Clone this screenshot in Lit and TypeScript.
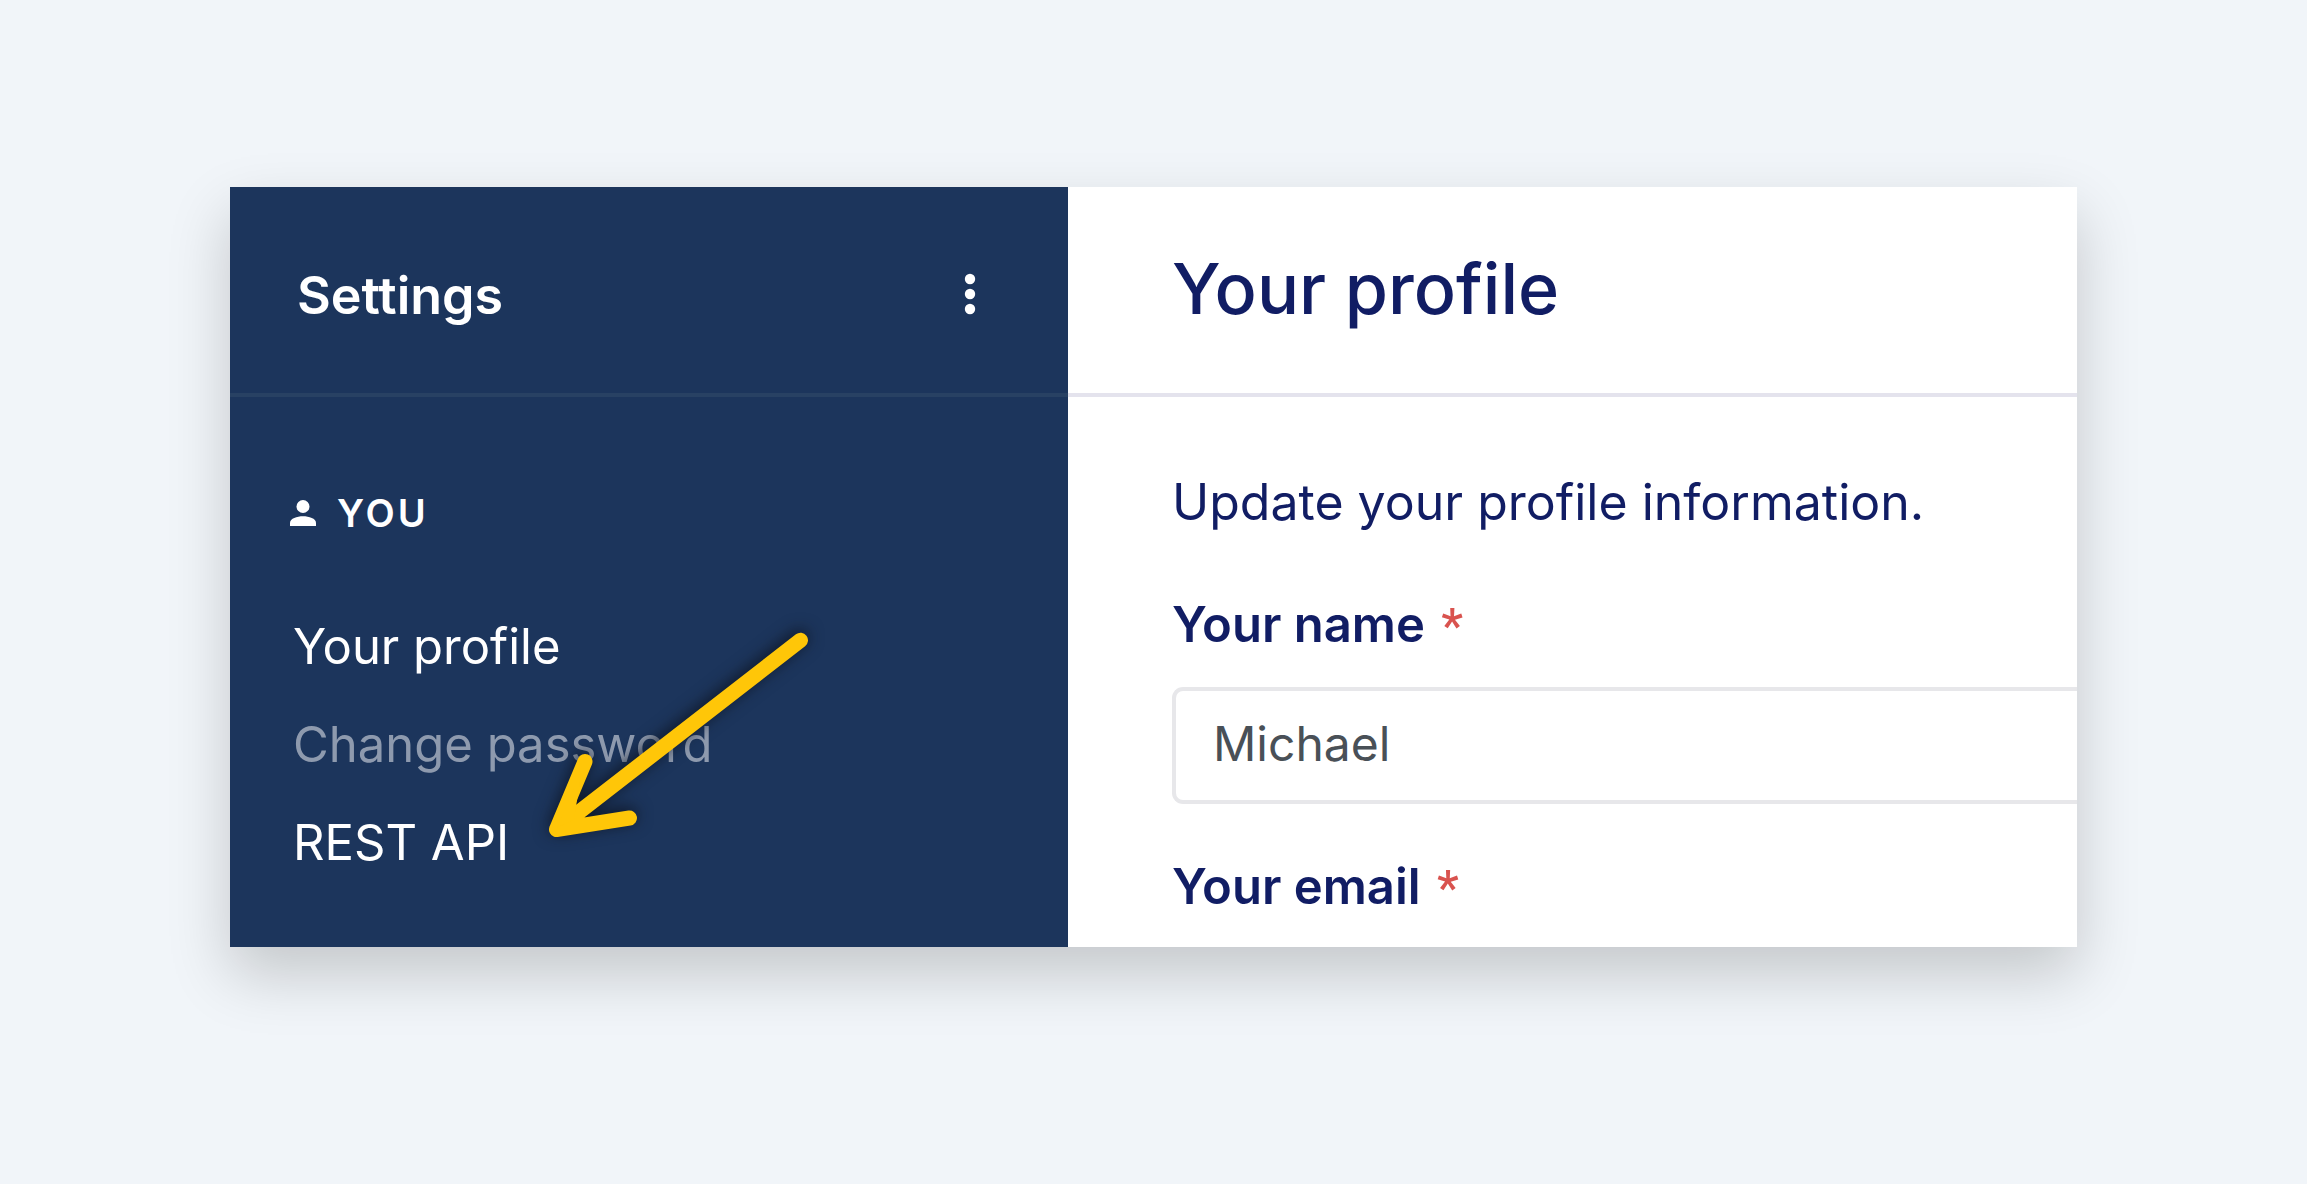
import { LitElement, html, css, svg } from "lit";
import { customElement, property, state } from "lit/decorators.js";
import { classMap } from "lit/directives/class-map.js";

interface NavItem {
  label: string;
  muted?: boolean;
}

@customElement("settings-sidebar")
class SettingsSidebar extends LitElement {
  @property({ attribute: false }) items: NavItem[] = [];

  static styles = css`
    :host {
      display: block;
      position: relative;
      background: #1c355c;
      color: #fff;
    }
    .head {
      box-sizing: border-box;
      height: 210px;
      padding: 0 84px 0 67px;
      display: flex;
      align-items: center;
      justify-content: space-between;
      border-bottom: 4px solid #284163;
    }
    .title {
      margin: 0;
      padding-top: 11px;
      font-size: 52px;
      line-height: 64px;
      font-weight: 600;
    }
    .menu {
      border: 0;
      padding: 8px;
      margin-top: 8px;
      background: none;
      color: inherit;
      display: flex;
    }
    .group {
      margin: 0;
      padding: 92px 0 0 60px;
      display: flex;
      align-items: center;
      gap: 21px;
      font-size: 38px;
      line-height: 48px;
      font-weight: 600;
      letter-spacing: 3px;
    }
    .list {
      list-style: none;
      margin: 0;
      padding: 61px 0 0 63px;
      font-size: 49px;
      line-height: 98px;
    }
    .link {
      color: #fff;
      text-decoration: none;
    }
    .link.muted {
      color: #8e9aae;
    }
    .arrow {
      position: absolute;
      left: 300px;
      top: 430px;
      overflow: visible;
      pointer-events: none;
      filter: drop-shadow(0 -3px 8px rgba(10, 12, 20, 0.75));
    }
  `;

  render() {
    return html`
      <header class="head">
        <h2 class="title">Settings</h2>
        <button class="menu" type="button" aria-label="More options">
          <svg width="12" height="42" viewBox="0 0 12 42" fill="currentColor">
            ${[6, 21, 36].map((y) => svg`<circle cx="6" cy=${y} r="5.2" />`)}
          </svg>
        </button>
      </header>
      <nav>
        <h3 class="group">
          <svg width="26" height="26" viewBox="0 0 26 26" fill="currentColor">
            <circle cx="13" cy="6.5" r="6.5" />
            <path d="M0 26v-3.300C0 18.400 7 16.200 13 16.200s13 2.200 13 6.500V26z" />
          </svg>
          YOU
        </h3>
        <ul class="list">
          ${this.items.map(
            (item) => html`<li>
              <a class=${classMap({ link: true, muted: !!item.muted })} href="#">${item.label}</a>
            </li>`
          )}
        </ul>
      </nav>
      <svg
        class="arrow"
        width="300"
        height="230"
        viewBox="0 0 300 230"
        fill="none"
        stroke="#ffc608"
        stroke-width="15"
        stroke-linecap="round"
        stroke-linejoin="round"
        aria-hidden="true"
      >
        <path d="M270.500 23.300L26.500 212.500M55 144.500L26.500 212.500L99.500 201" />
        <path d="M52 152L27 211L44 202z" fill="#ffc608" stroke="none" />
      </svg>
    `;
  }
}

@customElement("profile-form")
class ProfileForm extends LitElement {
  @state() private name = "Michael";

  static styles = css`
    :host {
      display: block;
      background: #fff;
      color: #111d64;
      overflow: hidden;
    }
    .head {
      box-sizing: border-box;
      height: 210px;
      padding: 0 0 2px 104px;
      display: flex;
      align-items: center;
      border-bottom: 4px solid #e4e3ed;
    }
    .title {
      margin: 0;
      font-size: 70px;
      line-height: 88px;
      font-weight: 500;
    }
    .form {
      display: flex;
      flex-direction: column;
      padding: 73px 0 0 104px;
      font-size: 49px;
      line-height: 64px;
    }
    .intro {
      margin: 0 0 59px;
      font-size: 50px;
    }
    .label {
      margin-bottom: 30px;
      font-weight: 600;
    }
    .required {
      margin-left: 4px;
      color: #d9534f;
      font-family: Roboto, sans-serif;
      font-weight: 500;
      line-height: 1;
    }
    .field {
      box-sizing: border-box;
      width: 100%;
      height: 117px;
      margin-bottom: 51px;
      padding: 0 0 4px 37px;
      border: 4px solid #e7e7ea;
      border-right: 0;
      border-radius: 11px 0 0 11px;
      background: #fff;
      color: #495057;
      font: inherit;
      font-size: 48px;
    }
  `;

  render() {
    return html`
      <header class="head"><h1 class="title">Your profile</h1></header>
      <form class="form">
        <p class="intro">Update your profile information.</p>
        <label class="label" for="name">Your name <span class="required">*</span></label>
        <input
          class="field"
          id="name"
          type="text"
          required
          .value=${this.name}
          @input=${(e: Event) => (this.name = (e.target as HTMLInputElement).value)}
        />
        <label class="label" for="email">Your email <span class="required">*</span></label>
        <input class="field" id="email" type="email" required />
      </form>
    `;
  }
}

@customElement("app-root")
class AppRoot extends LitElement {
  private items: NavItem[] = [
    { label: "Your profile" },
    { label: "Change password", muted: true },
    { label: "REST API" },
  ];

  static styles = css`
    :host {
      box-sizing: border-box;
      display: flex;
      height: 100vh;
      padding: 187px 230px 237px;
      background: #f1f5f9;
      font-family: Inter, "Liberation Sans", sans-serif;
    }
    .card {
      flex: 1;
      min-width: 0;
      display: grid;
      grid-template-columns: minmax(0, 838fr) minmax(0, 1009fr);
      grid-template-rows: minmax(0, 1fr);
      overflow: hidden;
      box-shadow: 0 27px 58px rgba(0, 0, 0, 0.19);
    }
  `;

  render() {
    return html`
      <main class="card">
        <settings-sidebar .items=${this.items}></settings-sidebar>
        <profile-form></profile-form>
      </main>
    `;
  }
}
